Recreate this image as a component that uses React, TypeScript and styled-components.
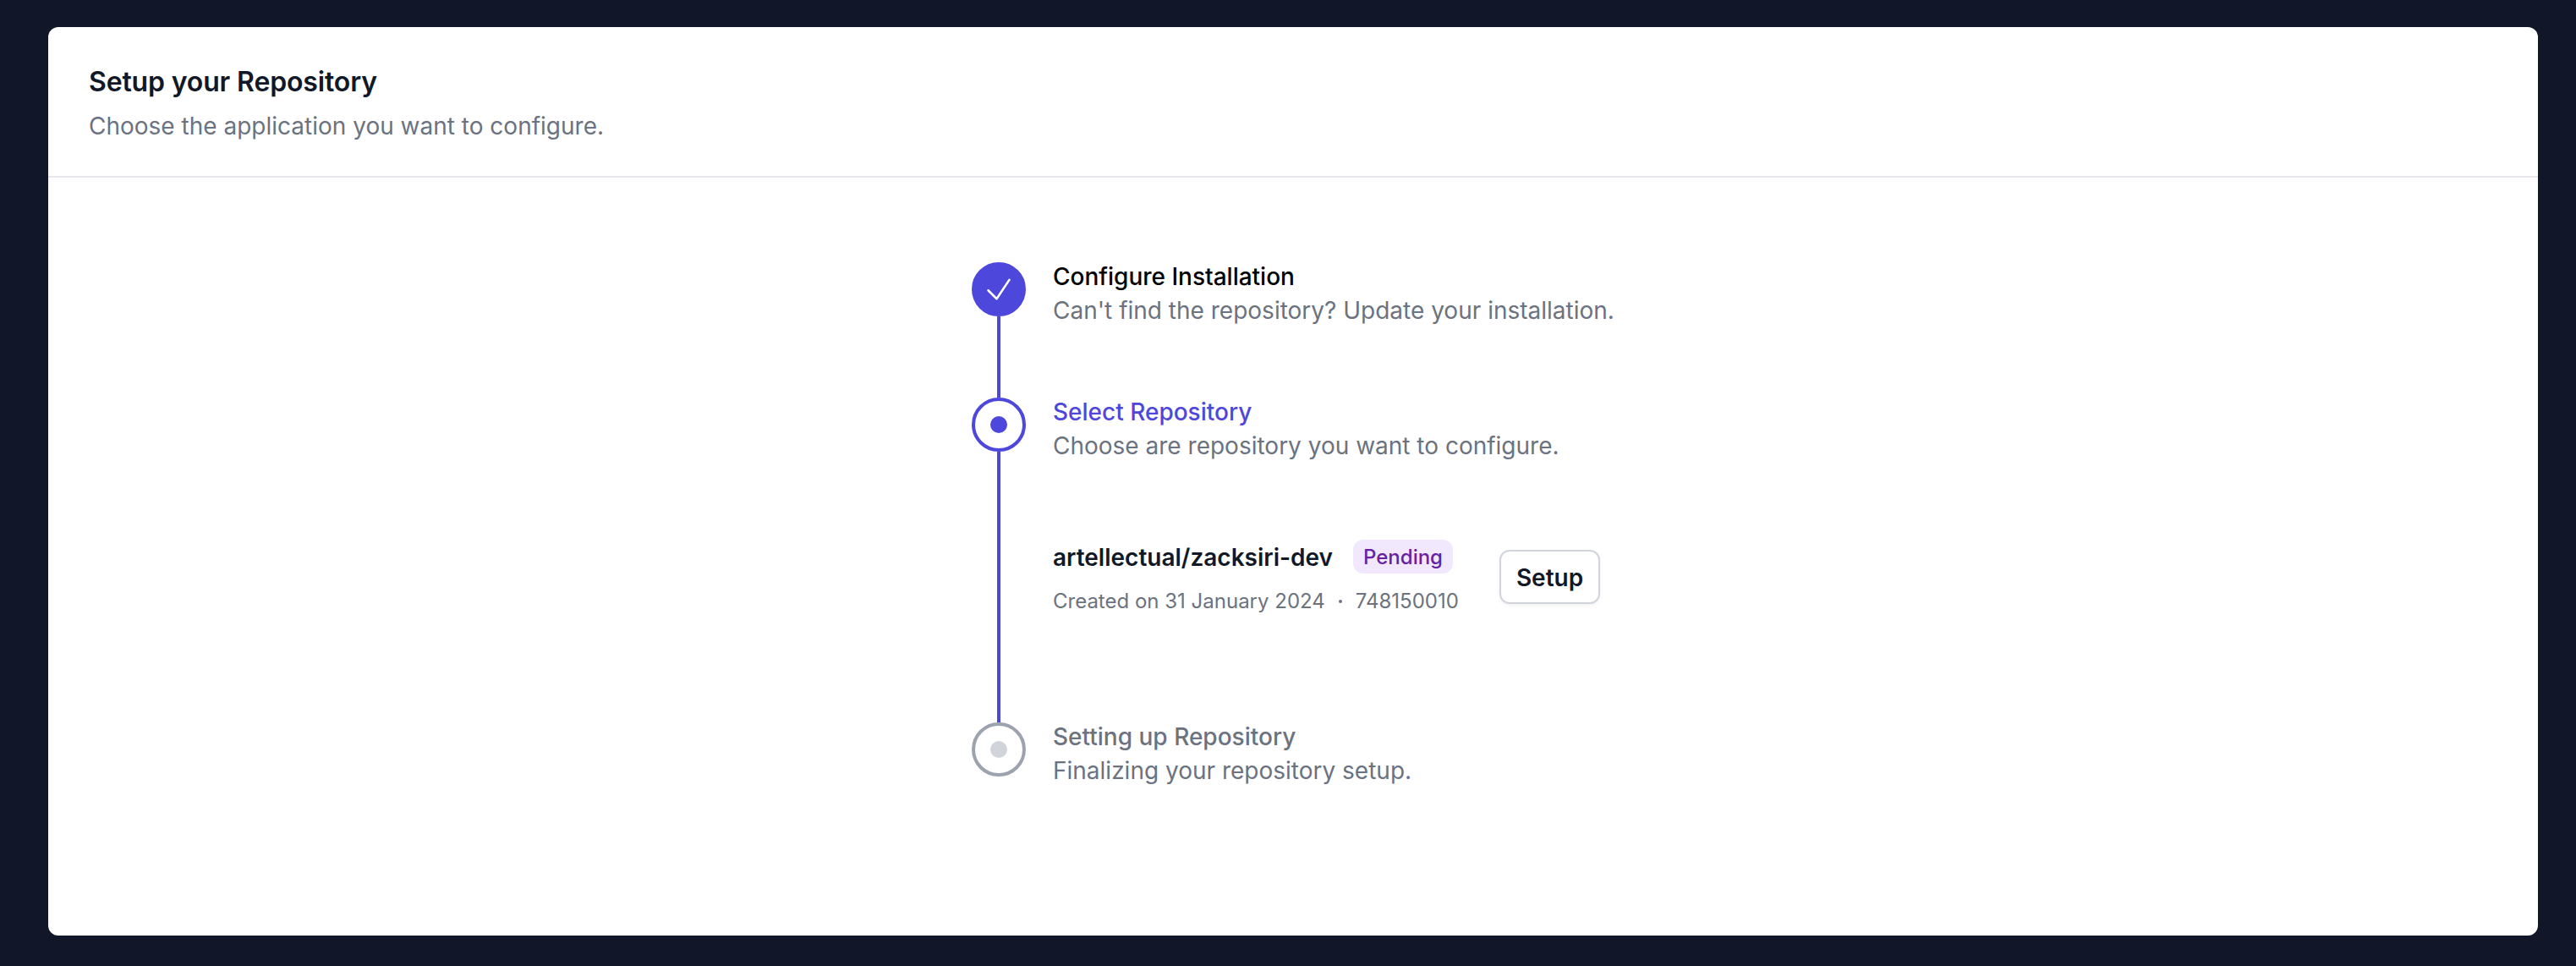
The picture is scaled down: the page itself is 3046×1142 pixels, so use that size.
import React from "react";
import styled, { createGlobalStyle, css } from "styled-components";

const GlobalStyle = createGlobalStyle`
  *, *::before, *::after { box-sizing: border-box; }
  body {
    margin: 0;
    background: #111729;
    font-family: Inter, "Liberation Sans", sans-serif;
  }
  ol, h1, h2, p { margin: 0; padding: 0; }
`;

type Status = "complete" | "current" | "upcoming";

const indigo = "#4e47dc";

const Page = styled.main`
  height: 1142px;
  padding: 32px 45px 36px 57px;
  background: #111729;
`;

const Card = styled.section`
  display: flex;
  flex-direction: column;
  height: 1074px;
  border-radius: 12px;
  background: #fff;
  overflow: hidden;
`;

const CardHeader = styled.header`
  height: 178px;
  padding: 40px 48px 0;
  border-bottom: 2px solid #e5e7eb;
`;

const Title = styled.h1`
  font-size: 32px;
  line-height: 49px;
  font-weight: 600;
  letter-spacing: -0.15px;
  color: #111827;
`;

const Subtitle = styled.p`
  margin-top: 8px;
  font-size: 28px;
  line-height: 40px;
  color: #6b7280;
`;

const CardBody = styled.div`
  display: flex;
  justify-content: center;
  padding: 96px 0;
`;

const Steps = styled.ol`
  width: 760px;
  list-style: none;
`;

const Step = styled.li<{ $height: number }>`
  display: flex;
  gap: 32px;
  height: ${(p) => p.$height}px;
`;

const Rail = styled.div`
  display: flex;
  flex-direction: column;
  align-items: center;
  width: 64px;
  padding-top: 4px;
  margin-bottom: -4px;
`;

const ringColor = { complete: indigo, current: indigo, upcoming: "#9ca3af" };

const Marker = styled.span<{ $status: Status }>`
  display: flex;
  flex: none;
  align-items: center;
  justify-content: center;
  width: 64px;
  height: 64px;
  border-radius: 50%;
  border: 4px solid ${(p) => ringColor[p.$status]};
  background: ${(p) => (p.$status === "complete" ? indigo : "#fff")};
`;

const Dot = styled.span<{ $status: Status }>`
  width: 20px;
  height: 20px;
  border-radius: 50%;
  background: ${(p) => (p.$status === "current" ? indigo : "#d1d5db")};
`;

const Connector = styled.span`
  flex: 1;
  width: 4px;
  background: ${indigo};
`;

const StepContent = styled.div`
  flex: 1;
  min-width: 0;
  padding-top: 1px;
`;

const titleColor = { complete: "#000", current: indigo, upcoming: "#6b7280" };

const StepTitle = styled.h2<{ $status: Status }>`
  font-size: 28px;
  line-height: 40px;
  font-weight: 500;
  color: ${(p) => titleColor[p.$status]};
`;

const StepText = styled.p`
  font-size: 28px;
  line-height: 40px;
  color: #6b7280;
  white-space: nowrap;
`;

const RepoRow = styled.div`
  display: flex;
  align-items: center;
  gap: 48px;
  height: 92px;
  margin-top: 91px;
`;

const RepoInfo = styled.div`
  display: flex;
  flex-direction: column;
  height: 92px;
  gap: 12px;
`;

const RepoHeading = styled.div`
  display: flex;
  align-items: center;
  gap: 24px;
`;

const RepoName = styled.p`
  padding-top: 2px;
  font-size: 28px;
  line-height: 38px;
  font-weight: 600;
  color: #111827;
`;

const smallText = css`
  font-size: 24px;
  white-space: nowrap;
`;

const Badge = styled.span`
  ${smallText}
  padding: 5px 12px 4px;
  border-radius: 12px;
  line-height: 31px;
  font-weight: 500;
  color: #6522a3;
  background: #f1e8fd;
`;

const Meta = styled.div`
  ${smallText}
  display: flex;
  align-items: center;
  gap: 16px;
  line-height: 41px;
  color: #6b7280;
`;

const Separator = styled.span`
  width: 4px;
  height: 4px;
  border-radius: 50%;
  background: currentColor;
`;

const Button = styled.button`
  height: 64px;
  margin-bottom: 4px;
  padding: 2px 18px 0;
  border: 2px solid #d1d5db;
  border-radius: 12px;
  background: #fff;
  box-shadow: 0 2px 4px rgba(0, 0, 0, 0.05);
  font: 600 28px/40px Inter, "Liberation Sans", sans-serif;
  color: #111827;
`;

const CheckIcon = () => (
  <svg width="40" height="40" viewBox="0 0 24 24" fill="none" stroke="#fff" strokeWidth="1.5" strokeLinecap="round" strokeLinejoin="round">
    <path d="m4.5 12.75 6 6 9-13.5" />
  </svg>
);

interface StepItemProps {
  status: Status;
  title: string;
  text: string;
  height: number;
  last?: boolean;
  children?: React.ReactNode;
}

const StepItem = ({ status, title, text, height, last, children }: StepItemProps) => (
  <Step $height={height}>
    <Rail>
      <Marker $status={status}>
        {status === "complete" ? <CheckIcon /> : <Dot $status={status} />}
      </Marker>
      {!last && <Connector />}
    </Rail>
    <StepContent>
      <StepTitle $status={status}>{title}</StepTitle>
      <StepText>{text}</StepText>
      {children}
    </StepContent>
  </Step>
);

export default function App() {
  return (
    <Page>
      <GlobalStyle />
      <Card>
        <CardHeader>
          <Title>Setup your Repository</Title>
          <Subtitle>Choose the application you want to configure.</Subtitle>
        </CardHeader>
        <CardBody>
          <Steps>
            <StepItem
              status="complete"
              title="Configure Installation"
              text="Can't find the repository? Update your installation."
              height={160}
            />
            <StepItem
              status="current"
              title="Select Repository"
              text="Choose are repository you want to configure."
              height={384}
            >
              <RepoRow>
                <RepoInfo>
                  <RepoHeading>
                    <RepoName>artellectual/zacksiri-dev</RepoName>
                    <Badge>Pending</Badge>
                  </RepoHeading>
                  <Meta>
                    <span>Created on 31 January 2024</span>
                    <Separator />
                    <span>748150010</span>
                  </Meta>
                </RepoInfo>
                <Button type="button">Setup</Button>
              </RepoRow>
            </StepItem>
            <StepItem
              status="upcoming"
              title="Setting up Repository"
              text="Finalizing your repository setup."
              height={80}
              last
            />
          </Steps>
        </CardBody>
      </Card>
    </Page>
  );
}
